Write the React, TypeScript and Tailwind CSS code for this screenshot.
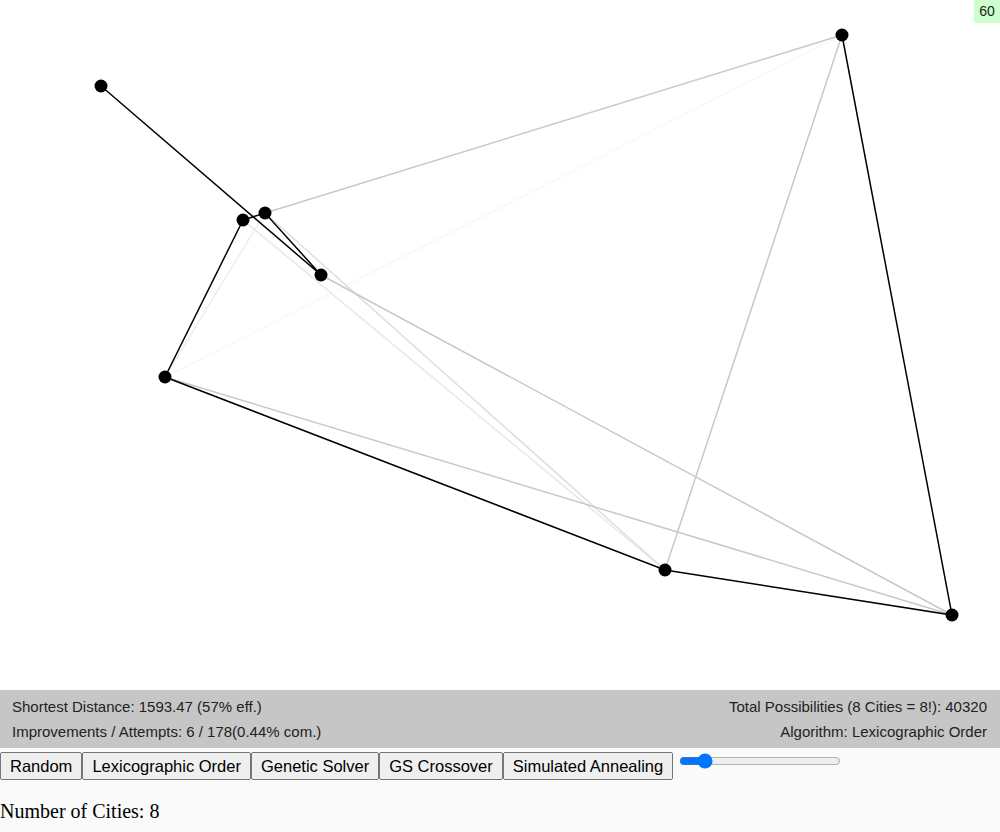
import React from "react";

type Pt = [number, number];

const cities: Record<string, Pt> = {
  A: [101, 86],
  B: [243, 220],
  C: [265, 213],
  D: [321, 275],
  E: [165, 377],
  F: [665, 570],
  G: [952, 615],
  H: [842, 35],
};

// current attempt, drawn faint
const attempt: [string, string, string][] = [
  ["E", "H", "#f8f8f8"],
  ["C", "E", "#eeeeee"],
  ["B", "F", "#e8e8e8"],
  ["C", "F", "#dedede"],
  ["C", "H", "#c8c8c8"],
  ["H", "F", "#c8c8c8"],
  ["D", "G", "#c8c8c8"],
  ["E", "G", "#c8c8c8"],
];

// best route so far
const best = ["A", "D", "C", "B", "E", "F", "G", "H"];

const buttons = [
  "Random",
  "Lexicographic Order",
  "Genetic Solver",
  "GS Crossover",
  "Simulated Annealing",
];

export default function App() {
  return (
    <div className="w-[1000px] h-[832px] bg-[#fafafa] overflow-hidden font-['Liberation_Sans',Arial,sans-serif] text-[#222]">
      <div className="relative h-[690px] bg-white">
        <svg width="1000" height="690" className="block">
          {attempt.map(([a, b, c], i) => (
            <line
              key={i}
              x1={cities[a][0]}
              y1={cities[a][1]}
              x2={cities[b][0]}
              y2={cities[b][1]}
              stroke={c}
              strokeWidth={1.5}
            />
          ))}
          <polyline
            points={best.map((k) => cities[k].join(",")).join(" ")}
            fill="none"
            stroke="#000"
            strokeWidth={1.5}
          />
          {Object.values(cities).map(([x, y], i) => (
            <circle key={i} cx={x} cy={y} r={6.5} fill="#000" />
          ))}
        </svg>
        <div className="absolute top-0 right-0 w-[26px] h-[23px] bg-[#ccffcc] text-[14px] leading-[23px] text-center">
          60
        </div>
      </div>

      <div className="flex justify-between bg-[#c6c6c6] h-[58px] px-[12px] pt-[4px] text-[15px] leading-[25px]">
        <div>
          <div>Shortest Distance: 1593.47 (57% eff.)</div>
          <div>Improvements / Attempts: 6 / 178(0.44% com.)</div>
        </div>
        <div className="text-right pr-[1px]">
          <div>Total Possibilities (8 Cities = 8!): 40320</div>
          <div>Algorithm: Lexicographic Order</div>
        </div>
      </div>

      <div className="flex items-start mt-[4px]">
        {buttons.map((b) => (
          <button
            key={b}
            className="h-[28px] px-[9px] bg-[#efefef] border border-[#767676] rounded-[2px] text-[16.5px] leading-[18px] text-black"
          >
            {b}
          </button>
        ))}
        <input
          type="range"
          min={2}
          max={50}
          defaultValue={8}
          className="w-[162px] ml-[6px] mt-[1px] accent-[#0075ff]"
        />
      </div>

      <p className="mt-[19px] text-[20px] leading-[24px] font-['Liberation_Serif','Times_New_Roman',serif] text-black">
        Number of Cities: 8
      </p>
    </div>
  );
}
